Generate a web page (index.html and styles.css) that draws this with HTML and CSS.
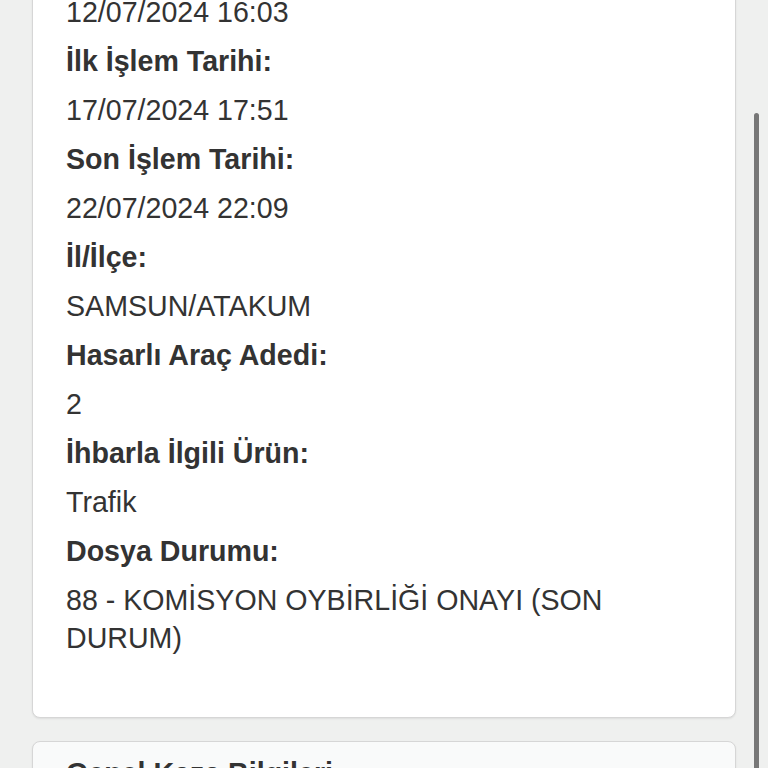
FILE: index.html
```
<!DOCTYPE html>
<html lang="tr">
<head>
    <meta charset="UTF-8">
    <meta name="viewport" content="width=device-width, initial-scale=1.0">
    <title>Dosya Bilgileri</title>
    <link rel="stylesheet" href="styles.css">
</head>
<body>
    <div class="page">
        <div class="info-card">
            <div class="value">12/07/2024 16:03</div>
            <div class="label">İlk İşlem Tarihi:</div>
            <div class="value">17/07/2024 17:51</div>
            <div class="label">Son İşlem Tarihi:</div>
            <div class="value">22/07/2024 22:09</div>
            <div class="label">İl/İlçe:</div>
            <div class="value">SAMSUN/ATAKUM</div>
            <div class="label">Hasarlı Araç Adedi:</div>
            <div class="value">2</div>
            <div class="label">İhbarla İlgili Ürün:</div>
            <div class="value">Trafik</div>
            <div class="label">Dosya Durumu:</div>
            <div class="value">88 - KOMİSYON OYBİRLİĞİ ONAYI (SON DURUM)</div>
        </div>

        <div class="info-card next-card">
            <div class="card-title">Genel Kaza Bilgileri</div>
        </div>
    </div>

    <div class="scroll-thumb"></div>
</body>
</html>
```

FILE: styles.css
```
html, body {
    height: 100%;
    overflow: hidden;
}
body {
    font-family: "Liberation Sans", Arial, sans-serif;
    margin: 0;
    padding: 0;
    background-color: #eff0ef;
    color: #333;
}
.page {
    margin-top: -40px;
    padding: 0 32px;
}
.info-card {
    background-color: white;
    border: 1px solid #d6d6d6;
    border-radius: 8px;
    box-shadow: 0 1px 2px rgba(0, 0, 0, 0.08);
    padding: 32px 33px 49px;
    margin-bottom: 23px;
}
.label, .value {
    font-size: 28.6px;
    line-height: 38px;
    margin-bottom: 11px;
}
.label {
    font-weight: bold;
}
.next-card {
    background-color: #f9fafa;
    padding-top: 12px;
}
.card-title {
    font-size: 28.6px;
    font-weight: bold;
    line-height: 38px;
}
.scroll-thumb {
    position: fixed;
    right: 9px;
    top: 113px;
    bottom: -10px;
    width: 5px;
    border-radius: 3px;
    background-color: #777;
}
```
